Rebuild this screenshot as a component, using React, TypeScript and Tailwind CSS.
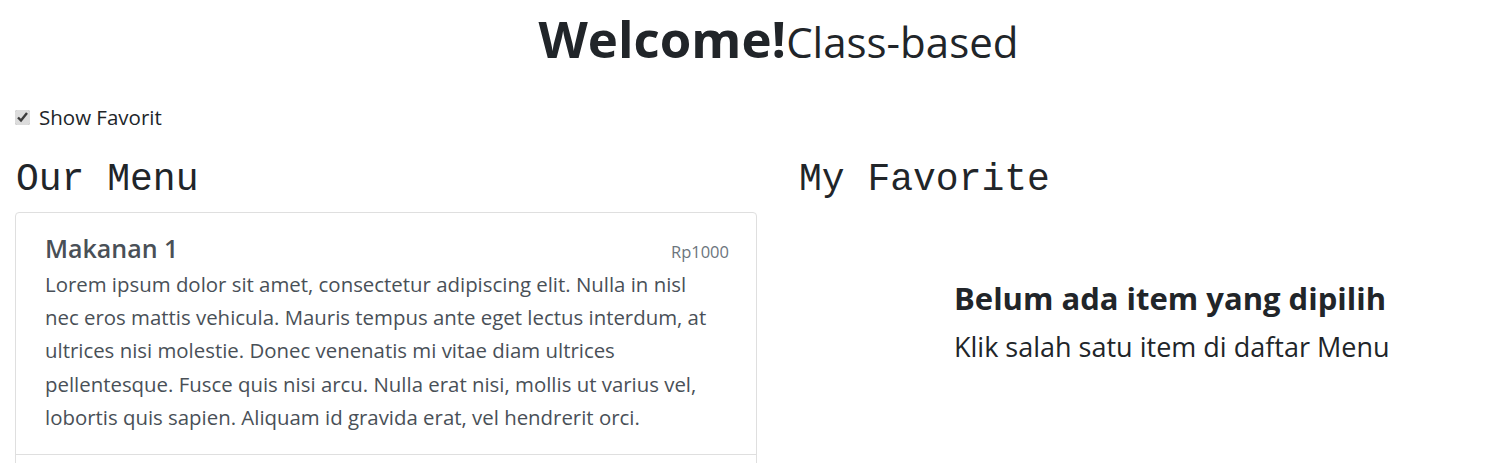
import { useState } from 'react';

const menu = [
  {
    id: 1,
    name: 'Makanan 1',
    price: 1000,
    desc: 'Lorem ipsum dolor sit amet, consectetur adipiscing elit. Nulla in nisl nec eros mattis vehicula. Mauris tempus ante eget lectus interdum, at ultrices nisi molestie. Donec venenatis mi vitae diam ultrices pellentesque. Fusce quis nisi arcu. Nulla erat nisi, mollis ut varius vel, lobortis quis sapien. Aliquam id gravida erat, vel hendrerit orci.',
  },
  {
    id: 2,
    name: 'Makanan 2',
    price: 2000,
    desc: 'Lorem ipsum dolor sit amet, consectetur adipiscing elit.',
  },
];

export default function App() {
  const [showFav, setShowFav] = useState(true);

  return (
    <div className="h-screen bg-white text-[#212529] font-['Open_Sans',sans-serif] overflow-hidden">
      <h1 className="text-center leading-[76px] pl-[60px]">
        <span className="text-[51px] font-bold">Welcome!</span>
        <span className="text-[42px]">Class-based</span>
      </h1>

      <label className="flex items-center gap-[9px] px-[15px] mt-[12px] text-[20.5px] leading-[30px]">
        <input
          type="checkbox"
          checked={showFav}
          onChange={(e) => setShowFav(e.target.checked)}
          className="w-[15px] h-[15px] accent-[#dcdcdc]"
        />
        Show Favorit
      </label>

      <div className="flex px-[15px] mt-[25px]">
        <div className="w-[742px] shrink-0">
          <h2 className="font-['Liberation_Mono',monospace] text-[38px] leading-[46px] text-[#212529] pl-px">
            Our Menu
          </h2>
          <ul className="mt-[9px] border border-[#dfdfdf] rounded-[4px]">
            {menu.map((item) => (
              <li key={item.id} className="pl-[29px] pr-[27px] pt-[19px] pb-[20px] border-b border-[#dfdfdf] last:border-b-0">
                <div className="flex justify-between items-baseline">
                  <h5 className="text-[25px] font-semibold leading-[32px] text-[#495057]">{item.name}</h5>
                  <small className="text-[16.5px] text-[#6c757d]">Rp{item.price}</small>
                </div>
                <p className="mt-[3px] pr-[8px] text-[20.4px] leading-[33.25px] text-[#495057]">{item.desc}</p>
              </li>
            ))}
          </ul>
        </div>

        <div className="ml-[42px] flex-1">
          <h2 className="font-['Liberation_Mono',monospace] text-[38px] leading-[46px] text-[#212529]">
            My Favorite
          </h2>
          <div className="pl-[155px] pt-[74px]">
            <h3 className="text-[31px] font-bold leading-[42px]">Belum ada item yang dipilih</h3>
            <p className="text-[27px] leading-[36px] mt-[10px]">Klik salah satu item di daftar Menu</p>
          </div>
        </div>
      </div>
    </div>
  );
}
